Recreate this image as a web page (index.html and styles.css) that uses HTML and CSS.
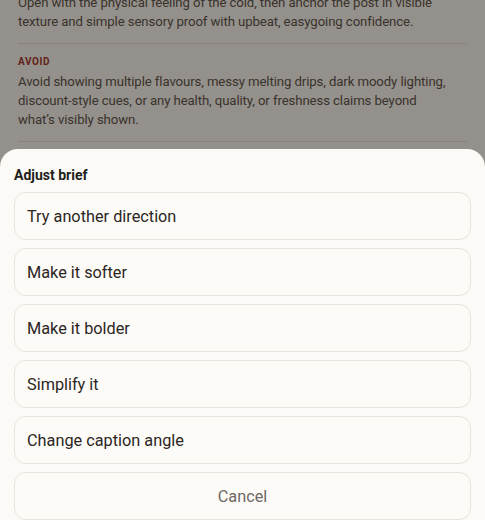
FILE: index.html
```html
<!DOCTYPE html>
<html lang="en">
<head>
	<meta charset="UTF-8">
	<title>Brief</title>
	<link rel="stylesheet" href="styles.css">
</head>
<body>
	<div class="page">
		<section class="brief">
			<p class="brief-text">Open with the physical feeling of the cold, then anchor the post in visible texture and simple sensory proof with upbeat, easygoing confidence.</p>
		</section>
		<section class="brief">
			<h4 class="brief-label">Avoid</h4>
			<p class="brief-text">Avoid showing multiple flavours, messy melting drips, dark moody lighting, discount-style cues, or any health, quality, or freshness claims beyond what’s visibly shown.</p>
		</section>
	</div>

	<div class="scrim"></div>

	<div class="sheet">
		<h3 class="sheet-title">Adjust brief</h3>
		<ul class="options">
			<li><button class="option">Try another direction</button></li>
			<li><button class="option">Make it softer</button></li>
			<li><button class="option">Make it bolder</button></li>
			<li><button class="option">Simplify it</button></li>
			<li><button class="option">Change caption angle</button></li>
			<li><button class="option cancel">Cancel</button></li>
		</ul>
	</div>
</body>
</html>
```

FILE: styles.css
```css
* {margin: 0;padding: 0;box-sizing: border-box;}
ul {list-style: none;}
html, body {height: 100%;overflow: hidden;}
body {background: #fcfaf6;font-family: Roboto, "Noto Sans", sans-serif;color: #2b2623;}

/* brief page under the sheet */
.page {margin-top: -7px;padding: 0 18px 0 18px;}
.brief {padding: 0 0 12px;border-bottom: 1px solid #e4ded6;}
.brief + .brief {padding-top: 12px;}
.brief-label {font-size: 10px;line-height: 12px;font-weight: 700;letter-spacing: .6px;text-transform: uppercase;color: #a3302a;margin-bottom: 4px;}
.brief-text {max-width: 432px;font-size: 13.2px;line-height: 19px;letter-spacing: -.1px;color: #584e47;}

.scrim {position: fixed;inset: 0;background: rgba(22, 17, 12, .45);}

/* action sheet */
.sheet {position: fixed;left: 0;right: 0;top: 149px;bottom: 0;background: #fcfaf6;border-radius: 18px 18px 0 0;padding: 18px 14px 0;}
.sheet-title {font-size: 14px;font-weight: 700;color: #221e1b;margin-bottom: 9px;}
.options {display: flex;flex-direction: column;gap: 8px;}
.option {display: block;width: 100%;height: 48px;padding: 0 12px;text-align: left;font: inherit;font-size: 16.3px;color: #2b2623;background: #fdfbf8;border: 1px solid #e8e4de;border-radius: 12px;}
.option.cancel {text-align: center;color: #6e6964;}
```
